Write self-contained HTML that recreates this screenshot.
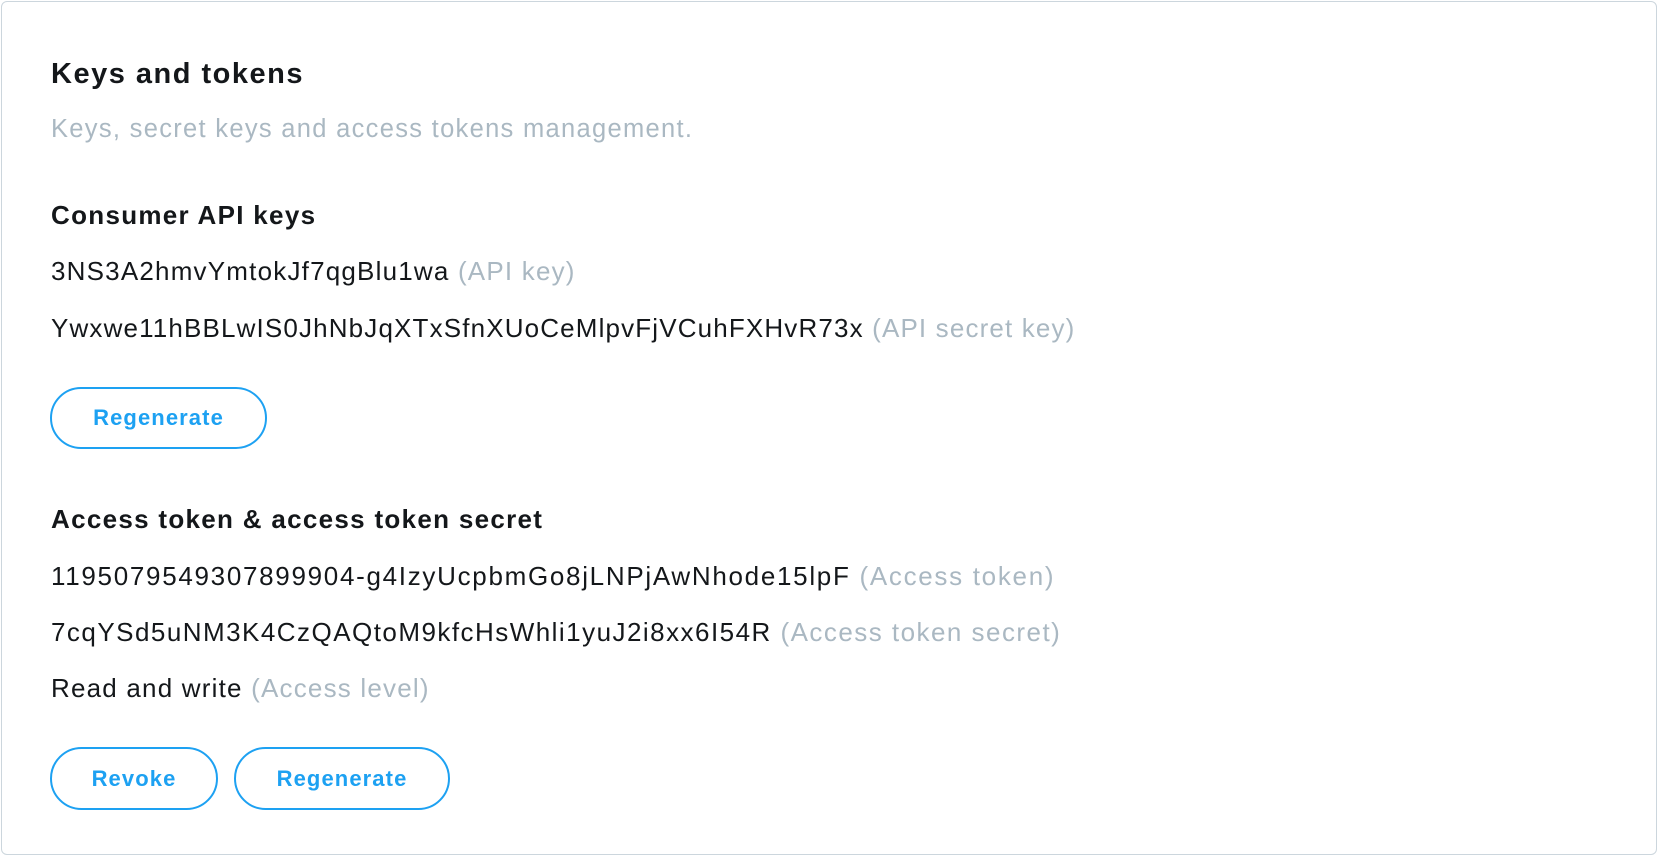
<!DOCTYPE html>
<html><head><meta charset="utf-8"><style>
html,body{margin:0;padding:0;background:#fff;width:1658px;height:856px;overflow:hidden;font-family:"Liberation Sans",Arial,sans-serif;color:#14171a}
.card{position:absolute;left:1px;top:1px;width:1656px;height:854px;border:1.5px solid #ccd6dd;border-radius:6px;box-sizing:border-box}
.t{position:absolute;left:51px;white-space:nowrap}
.h1{font-size:29px;font-weight:bold;letter-spacing:1.5px}
.sub{font-size:25.5px;color:#aab8c2;letter-spacing:1.3px}
.h2{font-size:26px;font-weight:bold;letter-spacing:1.3px}
.b{font-size:26px;letter-spacing:1.2px}
.g{color:#aab8c2}
.btn{position:absolute;border:2px solid #1da1f2;border-radius:32px;box-sizing:border-box;color:#1da1f2;font-weight:bold;font-size:22px;letter-spacing:1.1px;display:flex;align-items:center;justify-content:center}
</style></head><body>
<div class="card"></div>
<div class="t h1" style="top:58px">Keys and tokens</div>
<div class="t sub" style="top:115px">Keys, secret keys and access tokens management.</div>
<div class="t h2" style="top:200px">Consumer API keys</div>
<div class="t b" style="top:256px">3NS3A2hmvYmtokJf7qgBlu1wa <span class="g">(API key)</span></div>
<div class="t b" style="top:313px;letter-spacing:1.15px">Ywxwe11hBBLwIS0JhNbJqXTxSfnXUoCeMlpvFjVCuhFXHvR73x <span class="g">(API secret key)</span></div>
<div class="btn" style="left:50px;top:387px;width:217px;height:62px">Regenerate</div>
<div class="t h2" style="top:504px">Access token &amp; access token secret</div>
<div class="t b" style="top:561px;letter-spacing:1.7px">1195079549307899904-g4IzyUcpbmGo8jLNPjAwNhode15lpF <span class="g">(Access token)</span></div>
<div class="t b" style="top:617px;letter-spacing:1.47px">7cqYSd5uNM3K4CzQAQtoM9kfcHsWhli1yuJ2i8xx6I54R <span class="g">(Access token secret)</span></div>
<div class="t b" style="top:673px">Read and write <span class="g">(Access level)</span></div>
<div class="btn" style="left:50px;top:747px;width:168px;height:63px">Revoke</div>
<div class="btn" style="left:234px;top:747px;width:216px;height:63px">Regenerate</div>
</body></html>
